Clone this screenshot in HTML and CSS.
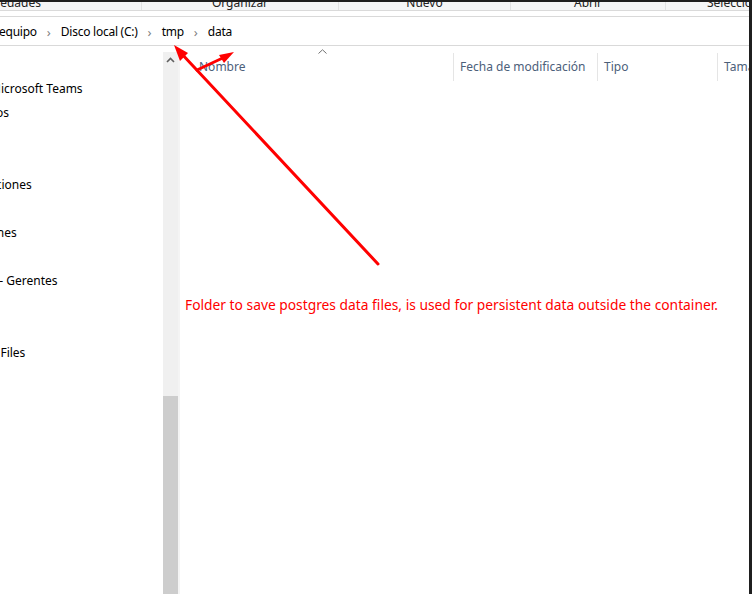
FILE: index.html
```html
<!DOCTYPE html>
<html lang="es">
<head>
<meta charset="utf-8">
<link rel="stylesheet" href="styles.css">
</head>
<body>
<div class="window">
  <div class="topbar"></div>
  <div class="ribbon">
    <div class="group g1"><span>Propiedades</span></div>
    <div class="group g2"><span>Organizar</span></div>
    <div class="group g3"><span>Nuevo</span></div>
    <div class="group g4"><span>Abrir</span></div>
    <div class="group g5"><span>Selección</span></div>
  </div>
  <div class="gap"></div>
  <div class="address">
    <span class="crumb">equipo</span>
    <span class="sep">›</span>
    <span class="crumb">Disco local (C:)</span>
    <span class="sep">›</span>
    <span class="crumb">tmp</span>
    <span class="sep">›</span>
    <span class="crumb">data</span>
  </div>
  <div class="main">
    <div class="nav">
      <div class="navitem">Microsoft Teams</div>
      <div class="navitem">Documentos</div>
      <div class="navitem"></div>
      <div class="navitem"></div>
      <div class="navitem">Aplicaciones</div>
      <div class="navitem"></div>
      <div class="navitem">Presentaciones</div>
      <div class="navitem"></div>
      <div class="navitem">Equipo - Gerentes</div>
      <div class="navitem"></div>
      <div class="navitem"></div>
      <div class="navitem">Program Files</div>
    </div>
    <div class="scrollbar">
      <div class="arrow"><svg width="9" height="6" viewBox="0 0 9 6"><path d="M1 5 L4.5 1.5 L8 5" fill="none" stroke="#606060" stroke-width="1.6"/></svg></div>
      <div class="track"></div>
      <div class="thumb"></div>
    </div>
    <div class="divider"></div>
    <div class="content">
      <div class="header">
        <div class="col c-name">Nombre<span class="sort"><svg width="9" height="5" viewBox="0 0 9 5"><path d="M0.5 4.5 L4.5 0.8 L8.5 4.5" fill="none" stroke="#707070" stroke-width="1"/></svg></span></div>
        <div class="col c-date">Fecha de modificación</div>
        <div class="col c-type">Tipo</div>
        <div class="col c-size">Tamaño</div>
      </div>
      <div class="note">Folder to save postgres data files, is used for persistent data outside the container.</div>
    </div>
  </div>
  <div class="rightedge"></div>
  <svg class="arrows" width="752" height="594" viewBox="0 0 752 594">
    <g stroke="#ff0000" stroke-width="3" fill="none" stroke-linecap="round">
      <line x1="378" y1="264" x2="180" y2="52"/>
      <line x1="197" y1="70" x2="227" y2="56"/>
    </g>
    <g fill="#ff0000">
      <polygon points="174,45 188,53 180,61"/>
      <polygon points="234,52 224,63 219,55"/>
    </g>
  </svg>
</div>
</body>
</html>
```
FILE: styles.css
```css
html, body {
  margin: 0;
  padding: 0;
}
body {
  width: 752px;
  height: 594px;
  overflow: hidden;
  background: #ffffff;
  font-family: "Noto Sans", "Open Sans", sans-serif;
  font-size: 12px;
  color: #000;
}
.window {
  position: relative;
  width: 752px;
  height: 594px;
  display: flex;
  flex-direction: column;
}
.topbar {
  height: 2px;
  background: #1f1f1f;
  flex: none;
}
.ribbon {
  height: 8px;
  background: #f5f6f7;
  border-bottom: 1px solid #dadada;
  display: flex;
  overflow: hidden;
  flex: none;
}
.group {
  border-right: 1px solid #e2e3e4;
  display: flex;
  justify-content: center;
  align-items: flex-end;
  height: 8px;
  overflow: hidden;
  flex: none;
  box-sizing: border-box;
}
.group span {
  line-height: 14px;
  color: #222;
  white-space: nowrap;
  flex: none;
}
.g1 { width: 142px; justify-content: flex-end; }
.g1 span { margin-right: 100px; }
.g2 { width: 197px; }
.g3 { width: 172px; }
.g4 { width: 155px; }
.g5 { width: 86px; border-right: none; justify-content: flex-start; }
.g5 span { margin-left: 41px; }
.gap {
  height: 5px;
  flex: none;
}
.address {
  border-top: 1px solid #d9d9d9;
  border-bottom: 1px solid #d9d9d9;
  display: flex;
  align-items: center;
  padding-top: 2px;
  box-sizing: border-box;
  height: 30px;
  margin-left: -1px;
  flex: none;
  color: #000;
}
.crumb {
  line-height: 16px;
  letter-spacing: -0.25px;
}
.sep {
  color: #808080;
  font-size: 13px;
  width: 24px;
  text-align: center;
  line-height: 16px;
  flex: none;
}
.main {
  flex: 1;
  display: flex;
  min-height: 0;
}
.nav {
  width: 163px;
  padding-top: 35px;
  overflow: hidden;
  flex: none;
  box-sizing: border-box;
}
.navitem {
  height: 24px;
  line-height: 16px;
  white-space: nowrap;
  margin-left: -10px;
}
.navitem:nth-child(2) { margin-left: -63px; }
.navitem:nth-child(5) { margin-left: -38px; }
.navitem:nth-child(7) { margin-left: -69px; }
.navitem:nth-child(9) { margin-left: -43px; }
.navitem:nth-child(12) { margin-left: -52px; }
.scrollbar {
  width: 15px;
  flex: none;
  margin-top: 6px;
  background: #f0f0f0;
  display: flex;
  flex-direction: column;
}
.arrow {
  height: 16px;
  display: flex;
  align-items: center;
  justify-content: center;
}
.track {
  height: 328px;
}
.thumb {
  flex: 1;
  background: #cdcdcd;
}
.divider {
  width: 2px;
  background: #f4f4f4;
  flex: none;
  margin-top: 6px;
}
.content {
  flex: 1;
  min-width: 0;
  overflow: hidden;
}
.header {
  display: flex;
  height: 38px;
  padding-top: 7px;
  box-sizing: border-box;
  white-space: nowrap;
}
.col {
  color: #4c607a;
  line-height: 28px;
  border-left: 1px solid #e5e5e5;
  padding-left: 6px;
  height: 28px;
  position: relative;
  flex: none;
  box-sizing: border-box;
}
.c-name {
  width: 273px;
  border-left: none;
  padding-left: 19px;
}
.c-date { width: 144px; }
.c-type { width: 120px; }
.c-size { width: 60px; }
.sort {
  position: absolute;
  left: 138px;
  top: -4px;
  line-height: 0;
}
.note {
  color: #ff0000;
  font-size: 13.8px;
  margin-top: 211px;
  margin-left: 5px;
  white-space: nowrap;
}
.rightedge {
  position: absolute;
  right: 0;
  top: 0;
  width: 3px;
  height: 594px;
  background: #1f1f1f;
}
.arrows {
  position: absolute;
  left: 0;
  top: 0;
  pointer-events: none;
}
```
